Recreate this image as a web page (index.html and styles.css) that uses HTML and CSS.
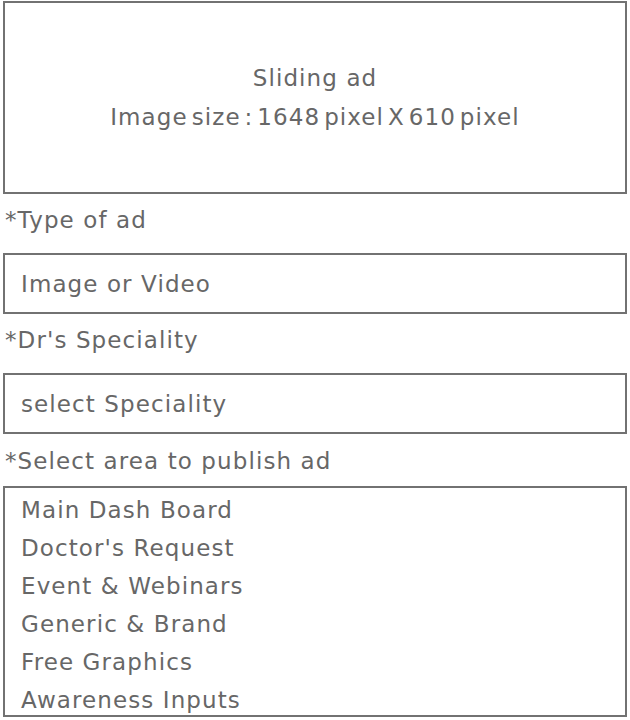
FILE: index.html
```html
<!DOCTYPE html>
<html lang="en">
<head>
<meta charset="utf-8">
<title>Ad upload</title>
<link rel="stylesheet" href="styles.css">
</head>
<body>
<div class="page">
  <div class="banner">
    <div class="banner-line">Sliding ad</div>
    <div class="banner-line banner-size">Image size : 1648 pixel X 610 pixel</div>
  </div>
  <div class="label">*Type of ad</div>
  <div class="field">Image or Video</div>
  <div class="label">*Dr's Speciality</div>
  <div class="field">select Speciality</div>
  <div class="label label-last">*Select area to publish ad</div>
  <div class="list">
    <div class="list-item">Main Dash Board</div>
    <div class="list-item">Doctor's Request</div>
    <div class="list-item">Event &amp; Webinars</div>
    <div class="list-item">Generic &amp; Brand</div>
    <div class="list-item">Free Graphics</div>
    <div class="list-item">Awareness Inputs</div>
  </div>
</div>
</body>
</html>
```
FILE: styles.css
```css
* { box-sizing: border-box; }
html, body { margin: 0; padding: 0; background: #ffffff; }
body {
  font-family: "DejaVu Sans", "Noto Sans", sans-serif;
  font-size: 23px;
  letter-spacing: 1.1px;
  color: #676767;
}
.page {
  padding: 1px 3px 0 3px;
  display: flex;
  flex-direction: column;
}
.banner {
  height: 193px;
  border: 2px solid #727272;
  display: flex;
  flex-direction: column;
  align-items: center;
  justify-content: center;
}
.banner-line {
  line-height: 39px;
  white-space: nowrap;
}
.banner-size { word-spacing: -4.5px; }
.label {
  height: 59px;
  padding: 14px 0 0 2px;
  line-height: 25px;
  white-space: nowrap;
}
.label-last { height: 52px; padding-top: 15px; }
.field {
  height: 61px;
  border: 2px solid #727272;
  padding: 0 0 0 16px;
  display: flex;
  align-items: center;
  white-space: nowrap;
}
.list {
  height: 231px;
  border: 2px solid #727272;
  padding: 3px 0 0 16px;
  overflow: hidden;
}
.list-item {
  line-height: 38px;
  white-space: nowrap;
}
```
